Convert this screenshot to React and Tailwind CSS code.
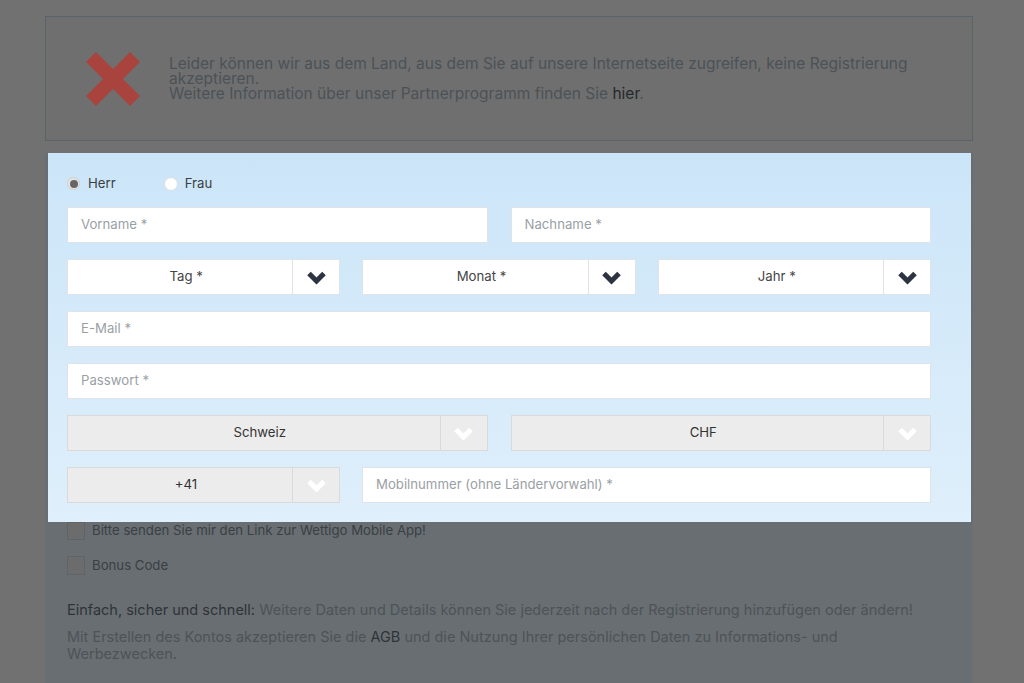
import React from "react";

const font = { fontFamily: "Inter, 'Noto Sans', sans-serif" };

function Chevron({ color }) {
  return (
    <svg width="21" height="15" viewBox="0 0 21 15">
      <polyline
        points="3,3.5 10.5,11 18,3.5"
        fill="none"
        stroke={color}
        strokeWidth="5"
        strokeLinejoin="miter"
        strokeLinecap="butt"
      />
    </svg>
  );
}

function TextInput({ placeholder, className = "" }) {
  return (
    <div
      className={`h-[36px] bg-white border border-[#dde3e8] flex items-center pl-[13px] text-[13.2px] text-[#9a9fa5] ${className}`}
    >
      {placeholder}
    </div>
  );
}

function Select({ label, disabled = false, className = "" }) {
  return (
    <div
      className={`h-[36px] flex border ${
        disabled ? "bg-[#ececec] border-[#dadada]" : "bg-white border-[#dde3e8]"
      } ${className}`}
    >
      <div
        className={`flex-1 flex items-center justify-center pl-[12px] text-[13.2px] ${
          disabled ? "text-[#333]" : "text-[#444]"
        }`}
      >
        {label}
      </div>
      <div
        className={`w-[47px] flex items-center justify-center border-l ${
          disabled ? "border-[#dadada]" : "border-[#dde3e8]"
        }`}
      >
        <Chevron color={disabled ? "#ffffff" : "#2e3342"} />
      </div>
    </div>
  );
}

export default function App() {
  return (
    <div className="min-h-[683px] w-full bg-[#717171] overflow-hidden" style={font}>
      <div className="ml-[45px] w-[928px] pt-[16px]">
        {/* Alert box */}
        <div className="h-[125px] border border-[#57656a] bg-[#6f6f6f] flex items-center">
          <div className="ml-[39px] w-[56px] h-[54px]">
            <svg viewBox="0 0 56 54" width="56" height="54">
              <line x1="6" y1="5" x2="50" y2="49" stroke="#a8433d" strokeWidth="14" />
              <line x1="50" y1="5" x2="6" y2="49" stroke="#a8433d" strokeWidth="14" />
            </svg>
          </div>
          <div className="ml-[28px] text-[15.5px] leading-[15px] text-[#4c5257]">
            <div>
              Leider können wir aus dem Land, aus dem Sie auf unsere Internetseite zugreifen, keine Registrierung
            </div>
            <div>akzeptieren.</div>
            <div>
              Weitere Information über unser Partnerprogramm finden Sie{" "}
              <span className="text-[#26292d]">hier</span>.
            </div>
          </div>
        </div>

        {/* Main container */}
        <div className="mt-[12px] bg-[#696e72] pb-[40px]">
          {/* Highlighted form */}
          <div className="ml-[3px] mr-[2px] bg-gradient-to-b from-[#cbe5f8] to-[#dfeffb] pt-[21px] pb-[19px] pl-[19px] pr-[40px]">
            <div className="h-[20px] flex items-center text-[13.2px] text-[#3b3f44]">
              <div className="flex items-center">
                <span className="w-[13px] h-[13px] rounded-full bg-[#e4e4e4] border border-[#d0d0d0] flex items-center justify-center">
                  <span className="w-[8px] h-[8px] rounded-full bg-[#666]"></span>
                </span>
                <span className="ml-[8px]">Herr</span>
              </div>
              <div className="flex items-center ml-[48px]">
                <span className="w-[14px] h-[14px] rounded-full bg-white border border-[#d8dde2]"></span>
                <span className="ml-[7px]">Frau</span>
              </div>
            </div>

            <div className="mt-[13px] grid grid-cols-2 gap-x-[23px]">
              <TextInput placeholder="Vorname *" />
              <TextInput placeholder="Nachname *" />
            </div>

            <div className="mt-[16px] grid grid-cols-3 gap-x-[22px]">
              <Select label="Tag *" />
              <Select label="Monat *" />
              <Select label="Jahr *" />
            </div>

            <div className="mt-[16px]">
              <TextInput placeholder="E-Mail *" />
            </div>
            <div className="mt-[16px]">
              <TextInput placeholder="Passwort *" />
            </div>

            <div className="mt-[16px] grid grid-cols-2 gap-x-[23px]">
              <Select label="Schweiz" disabled />
              <Select label="CHF" disabled />
            </div>

            <div className="mt-[16px] flex gap-x-[22px]">
              <Select label="+41" disabled className="w-[273px]" />
              <TextInput placeholder="Mobilnummer (ohne Ländervorwahl) *" className="flex-1" />
            </div>
          </div>

          {/* Dimmed lower part */}
          <div className="pl-[22px] pr-[40px]">
            <div className="flex items-center h-[18px]">
              <span className="w-[18px] h-[18px] bg-[#6c6c6c] border border-[#5f6468]"></span>
              <span className="ml-[7px] text-[13.2px] text-[#3a3f44]">
                Bitte senden Sie mir den Link zur Wettigo Mobile App!
              </span>
            </div>
            <div className="flex items-center h-[19px] mt-[16px]">
              <span className="w-[18px] h-[19px] bg-[#6c6c6c] border border-[#5f6468]"></span>
              <span className="ml-[7px] text-[13.2px] text-[#3a3f44]">Bonus Code</span>
            </div>
            <div className="mt-[26px] text-[14.5px] leading-[17px] text-[#4d5357]">
              <span className="text-[#2f3338]">Einfach, sicher und schnell:</span> Weitere Daten und
              Details können Sie jederzeit nach der Registrierung hinzufügen oder ändern!
            </div>
            <div className="mt-[10px] text-[14.5px] leading-[17px] text-[#4d5357] w-[790px]">
              Mit Erstellen des Kontos akzeptieren Sie die{" "}
              <span className="text-[#2f3338]">AGB</span> und die Nutzung Ihrer persönlichen Daten zu
              Informations- und Werbezwecken.
            </div>
          </div>
        </div>
      </div>
    </div>
  );
}
